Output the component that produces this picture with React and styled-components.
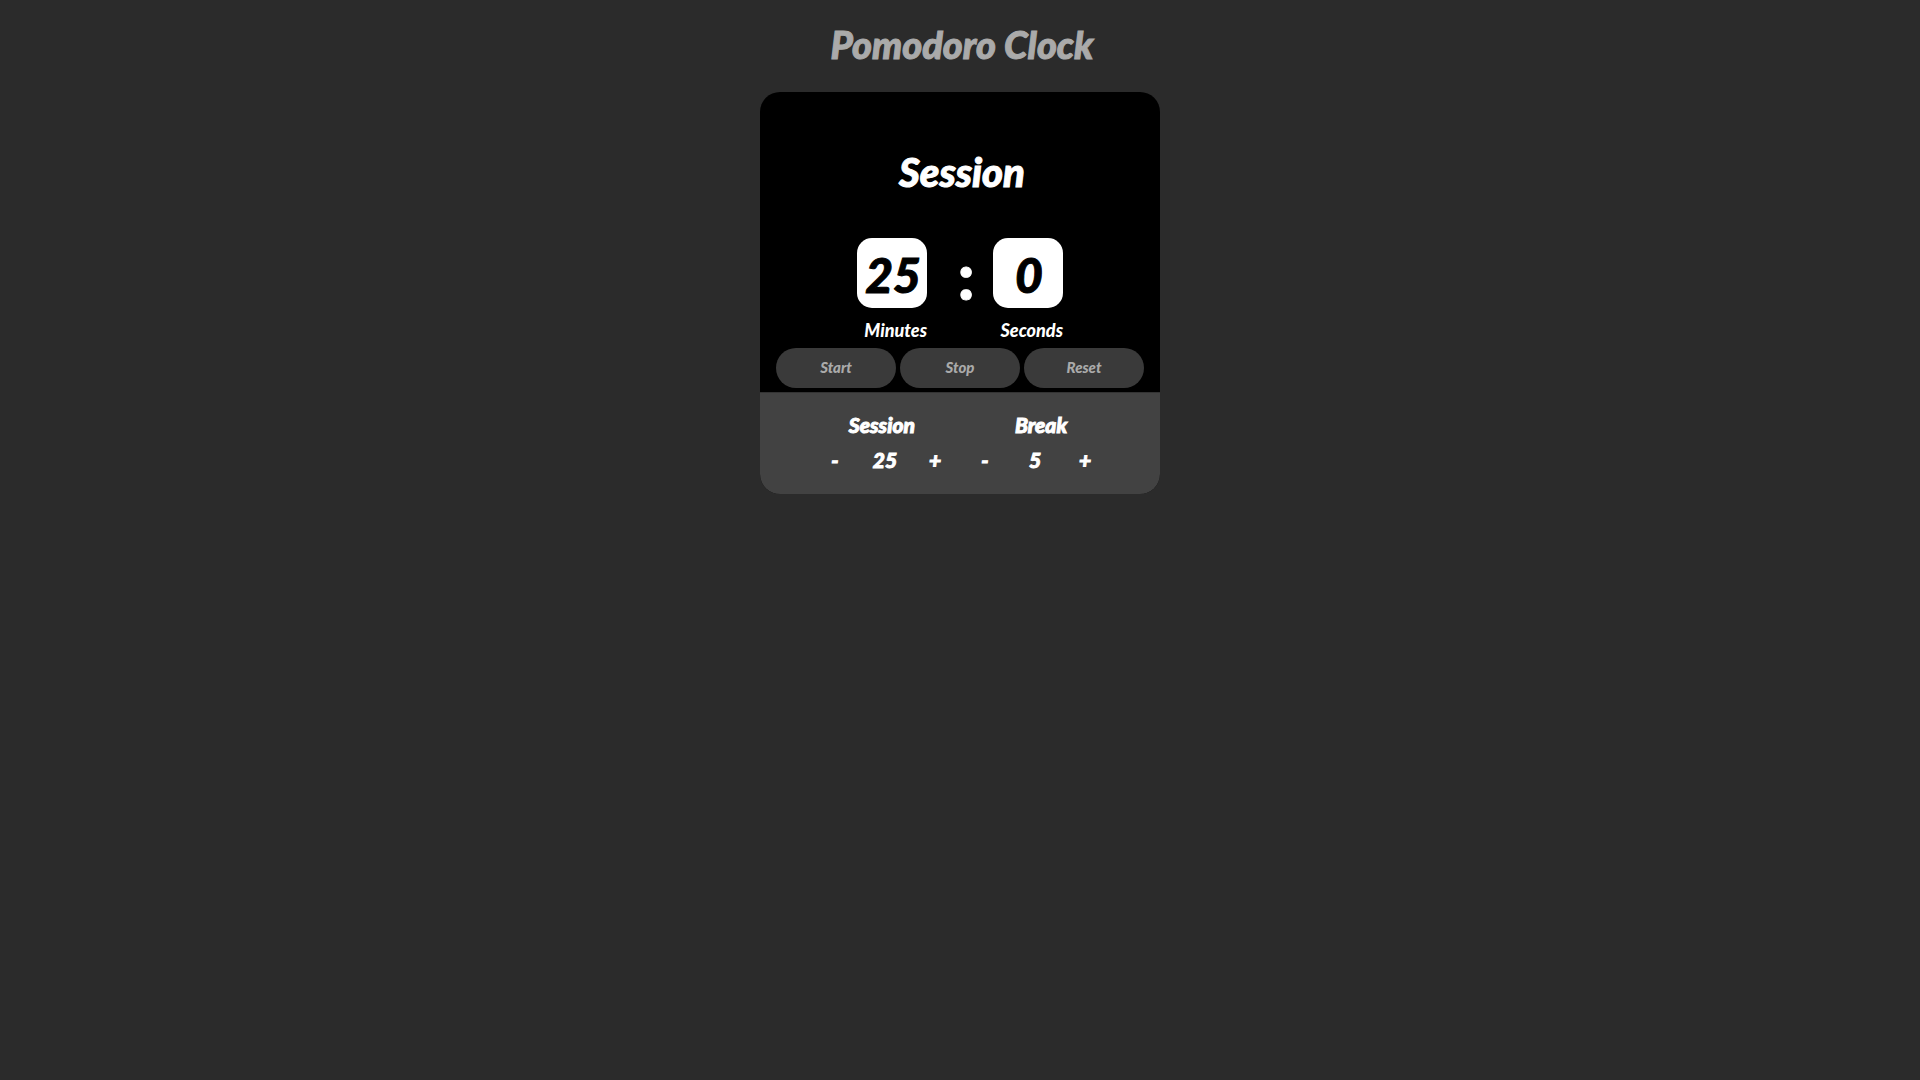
import React, { useEffect, useState } from "react";
import styled, { createGlobalStyle } from "styled-components";

const GlobalStyle = createGlobalStyle`
  * { box-sizing: border-box; }
  body {
    margin: 0;
    background: #2b2b2b;
    color: #fff;
    font-family: Lato, "Open Sans", sans-serif;
    font-weight: 900;
    font-style: italic;
  }
  button { font: inherit; cursor: pointer; }
`;

const Page = styled.main`
  display: flex;
  flex-direction: column;
  align-items: center;
  padding: 20px 16px;
`;

const Title = styled.h1`
  margin: 0 0 24px;
  padding-left: 4px;
  color: #aaa;
  font-size: 38px;
  line-height: 48px;
  font-weight: 900;
  -webkit-text-stroke: 1px currentColor;
`;

const Clock = styled.section`
  width: 100%;
  max-width: 400px;
  border-radius: 20px;
  overflow: hidden;
  background: #000;
`;

const Display = styled.div`
  display: flex;
  flex-direction: column;
  align-items: center;
  padding: 56px 16px 4px;
`;

const Mode = styled.h2`
  margin: 0 0 42px;
  padding-left: 4px;
  font-size: 40px;
  line-height: 48px;
  font-weight: 900;
  -webkit-text-stroke: 1px currentColor;
`;

const Time = styled.div`
  display: grid;
  grid-template-columns: 70px 66px 70px;
  margin-bottom: 8px;
`;

const Unit = styled.div`
  display: flex;
  flex-direction: column;
  align-items: flex-end;
`;

const Digits = styled.div`
  width: 70px;
  height: 70px;
  padding-left: 2px;
  border-radius: 15px;
  background: #fff;
  color: #000;
  font-size: 48px;
  line-height: 74px;
  text-align: center;
  -webkit-text-stroke: 1px currentColor;
`;

const UnitLabel = styled.div`
  margin-top: 12px;
  font-size: 18px;
  line-height: 20px;
`;

const Colon = styled.div`
  padding-left: 12px;
  font-size: 64px;
  line-height: 76px;
  font-style: normal;
  text-align: center;
  -webkit-text-stroke: 1px currentColor;
`;

const Controls = styled.div`
  display: grid;
  grid-template-columns: repeat(3, 1fr);
  gap: 4px;
  width: 100%;
`;

const ControlButton = styled.button`
  height: 40px;
  padding: 0 0 2px;
  border: 0;
  border-radius: 20px;
  background: #3a3a3a;
  color: #aaa;
  && { font-size: 15px; }
`;

const Settings = styled.div`
  padding: 18px 16px 20px;
  border-top: 1px solid #333;
  background: #424242;
  font-size: 21px;
  line-height: 28px;
  -webkit-text-stroke: 1px currentColor;
`;

const SettingTitles = styled.div`
  display: flex;
  justify-content: center;
  gap: 100px;
  padding-right: 4px;
  margin-bottom: 7px;
`;

const SettingValues = styled.div`
  display: flex;
  justify-content: center;
`;

const Stepper = styled.div`
  display: grid;
  grid-template-columns: repeat(3, 50px);
  text-align: center;
`;

const StepButton = styled.button`
  padding: 0;
  border: 0;
  background: transparent;
  color: inherit;
`;

function LengthStepper({ name, value, onChange }) {
  return (
    <Stepper role="group" aria-label={name}>
      <StepButton type="button" onClick={() => onChange(Math.max(1, value - 1))}>-</StepButton>
      <span>{value}</span>
      <StepButton type="button" onClick={() => onChange(value + 1)}>+</StepButton>
    </Stepper>
  );
}

export default function App() {
  const [session, setSession] = useState(25);
  const [rest, setRest] = useState(5);
  const [mode, setMode] = useState("Session");
  const [left, setLeft] = useState(25 * 60);
  const [running, setRunning] = useState(false);

  useEffect(() => {
    if (!running) return undefined;
    const timer = setTimeout(() => {
      if (left > 0) {
        setLeft(left - 1);
      } else {
        const next = mode === "Session" ? "Break" : "Session";
        setMode(next);
        setLeft((next === "Session" ? session : rest) * 60);
      }
    }, 1000);
    return () => clearTimeout(timer);
  }, [running, left, mode, session, rest]);

  const reset = () => {
    setRunning(false);
    setMode("Session");
    setLeft(session * 60);
  };

  const changeSession = (value) => {
    setSession(value);
    if (!running && mode === "Session") setLeft(value * 60);
  };

  return (
    <>
      <GlobalStyle />
      <Page>
        <Title>Pomodoro Clock</Title>
        <Clock>
          <Display>
            <Mode>{mode}</Mode>
            <Time>
              <Unit>
                <Digits>{Math.floor(left / 60)}</Digits>
                <UnitLabel>Minutes</UnitLabel>
              </Unit>
              <Colon>:</Colon>
              <Unit>
                <Digits>{left % 60}</Digits>
                <UnitLabel>Seconds</UnitLabel>
              </Unit>
            </Time>
            <Controls>
              <ControlButton type="button" onClick={() => setRunning(true)}>Start</ControlButton>
              <ControlButton type="button" onClick={() => setRunning(false)}>Stop</ControlButton>
              <ControlButton type="button" onClick={reset}>Reset</ControlButton>
            </Controls>
          </Display>
          <Settings>
            <SettingTitles>
              <span>Session</span>
              <span>Break</span>
            </SettingTitles>
            <SettingValues>
              <LengthStepper name="Session" value={session} onChange={changeSession} />
              <LengthStepper name="Break" value={rest} onChange={setRest} />
            </SettingValues>
          </Settings>
        </Clock>
      </Page>
    </>
  );
}
